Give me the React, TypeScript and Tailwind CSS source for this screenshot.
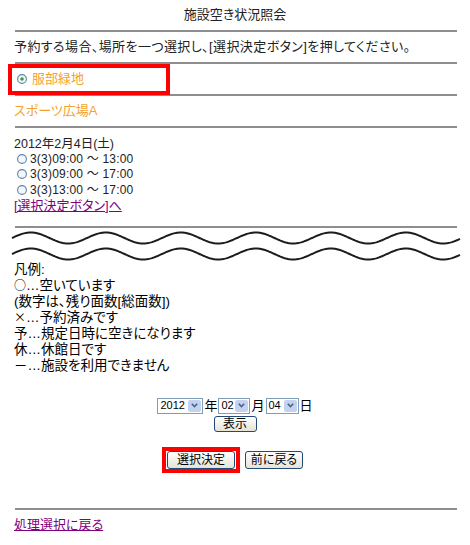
const wavePath = (cy: number) => {
  let d = "";
  for (let x = 12; x <= 460; x += 1) {
    const y = cy - 5.5 * Math.sin(((x - 12) * 2 * Math.PI) / 75);
    d += (x === 12 ? "M" : "L") + x + " " + y.toFixed(2) + " ";
  }
  return d;
};

const Rule = () => <div className="ml-[15px] h-[2px] w-[442px] bg-[#8e8e8e]" />;

const Radio = ({ checked = false }: { checked?: boolean }) => (
  <svg width="10" height="10" viewBox="0 0 10 10" className="shrink-0">
    <circle cx="5" cy="5" r="4.4" fill="#f4f6f8" stroke="#5b82b0" strokeWidth="1.1" />
    {checked && <circle cx="5" cy="5" r="1.8" fill="#2fa82f" />}
  </svg>
);

const Select = ({ value, width }: { value: string; width: string }) => (
  <div className={`flex h-[16px] items-stretch border border-[#7f9db9] bg-white ${width}`}>
    <span className="flex flex-1 items-center pl-[2px] text-[11px] leading-none text-black">{value}</span>
    <span className="m-[1px] flex w-[13px] items-center justify-center rounded-[2px] bg-[#c3d3ef]">
      <svg width="7" height="5" viewBox="0 0 7 5">
        <path d="M0.8 0.8 L3.5 3.6 L6.2 0.8" fill="none" stroke="#4d6185" strokeWidth="1.6" />
      </svg>
    </span>
  </div>
);

const Button = ({ label, width }: { label: string; width: string }) => (
  <button
    className={`flex items-center justify-center rounded-[3px] border border-[#1f4a7a] bg-gradient-to-b from-white to-[#e6e3d6] text-[12px] leading-none text-black ${width}`}
  >
    {label}
  </button>
);

// symbol glyphs from the CJK font, small enough to stay inside the 16px row
const Sym = ({ c }: { c: string }) => (
  <span className="relative -top-[1px] inline-block h-[16px] font-['Noto_Sans_CJK_JP',sans-serif] text-[12px] leading-[16px]">
    {c}
  </span>
);

const slots = ["3(3)09:00 ～ 13:00", "3(3)09:00 ～ 17:00", "3(3)13:00 ～ 17:00"];

export default function App() {
  return (
    <div className="relative h-[545px] w-[470px] overflow-hidden bg-white font-['Liberation_Sans','Noto_Sans_CJK_JP',sans-serif] text-[#222] [font-feature-settings:'palt']">
      <div className="flex h-[30px] items-center justify-center text-[13px]">施設空き状況照会</div>
      <Rule />
      <div className="flex h-[30px] items-center pl-[14px] text-[13px] tracking-[0.4px]">
        予約する場合、場所を一つ選択し、[選択決定ボタン]を押してください。
      </div>
      <Rule />
      <div className="relative flex h-[30px] items-center pl-[17px] text-[13px] text-[#f7a12a]">
        <Radio checked />
        <span className="ml-[5px]">服部緑地</span>
        <div className="absolute left-[8px] top-0 h-[31px] w-[162px] border-[4px] border-[#ff0000]" />
      </div>
      <Rule />
      <div className="flex h-[30px] items-center pl-[14px] text-[13px] text-[#f7a12a]">スポーツ広場A</div>
      <Rule />
      <div className="pt-[9px] pl-[14px] text-[12.5px]">
        <div className="flex h-[14px] items-center">2012年2月4日(土)</div>
        {slots.map((s, i) => (
          <div key={i} className="flex h-[15.5px] items-center pl-[3px] text-[12px] tracking-[0.2px]">
            <Radio />
            <span className="ml-[3px]">{s}</span>
          </div>
        ))}
        <div className="flex h-[15.5px] items-center">
          <a className="text-[13px] text-[#800080] underline">[選択決定ボタン]へ</a>
        </div>
      </div>
      <div className="h-[13px]" />
      <Rule />
      <svg width="470" height="34" className="block">
        <path d={wavePath(10)} fill="none" stroke="#1c1c1c" strokeWidth="2" />
        <path d={wavePath(26)} fill="none" stroke="#1c1c1c" strokeWidth="2" />
      </svg>
      <div className="pl-[14px] text-[13.5px] leading-[16px] text-black">
        <div className="flex h-[16px] items-center">凡例:</div>
        <div className="flex h-[16px] items-center">
          <Sym c="○" />
          <span>…空いています</span>
        </div>
        <div className="flex h-[16px] items-center">(数字は、残り面数[総面数])</div>
        <div className="flex h-[16px] items-center">
          <Sym c="×" />
          <span>…予約済みです</span>
        </div>
        <div className="flex h-[16px] items-center">予…規定日時に空きになります</div>
        <div className="flex h-[16px] items-center">休…休館日です</div>
        <div className="flex h-[16px] items-center">－…施設を利用できません</div>
      </div>
      <div className="mt-[22px] flex items-center justify-center text-[13px] text-black">
        <Select value="2012" width="w-[46px]" />
        <span className="mx-[1px]">年</span>
        <Select value="02" width="w-[32px]" />
        <span className="mx-[1px]">月</span>
        <Select value="04" width="w-[33px]" />
        <span className="ml-[1px]">日</span>
      </div>
      <div className="flex justify-center">
        <Button label="表示" width="h-[16px] w-[43px]" />
      </div>
      <div className="mt-[19px] flex justify-center gap-[10px]">
        <div className="relative">
          <Button label="選択決定" width="h-[18px] w-[68px]" />
          <div className="absolute -inset-[5px] -top-[4px] -bottom-[4px] border-[4px] border-[#ff0000]" />
        </div>
        <Button label="前に戻る" width="h-[18px] w-[58px]" />
      </div>
      <div className="h-[39px]" />
      <Rule />
      <div className="flex h-[30px] items-center pl-[14px]">
        <a className="text-[13px] text-[#800080] underline">処理選択に戻る</a>
      </div>
    </div>
  );
}
